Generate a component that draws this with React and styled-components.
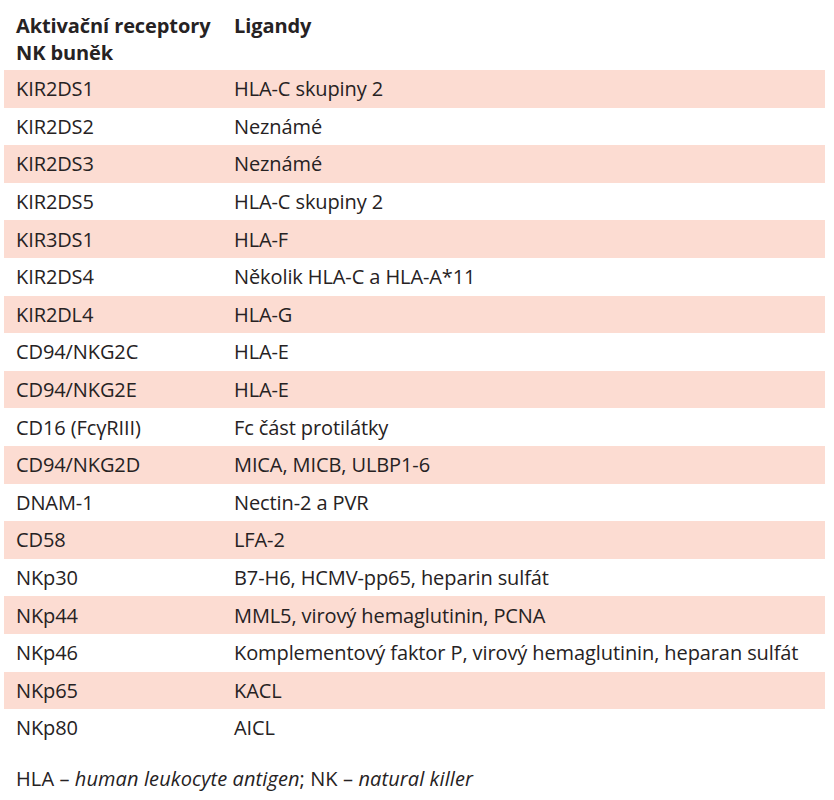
import { Fragment } from 'react';
import styled, { createGlobalStyle } from 'styled-components';

const GlobalStyle = createGlobalStyle`
  body {
    margin: 0;
    background: #ffffff;
    font-family: 'Open Sans', 'Noto Sans', sans-serif;
    color: #262223;
  }
`;

const rows = [
  ['KIR2DS1', 'HLA-C skupiny 2'],
  ['KIR2DS2', 'Neznámé'],
  ['KIR2DS3', 'Neznámé'],
  ['KIR2DS5', 'HLA-C skupiny 2'],
  ['KIR3DS1', 'HLA-F'],
  ['KIR2DS4', 'Několik HLA-C a HLA-A*11'],
  ['KIR2DL4', 'HLA-G'],
  ['CD94/NKG2C', 'HLA-E'],
  ['CD94/NKG2E', 'HLA-E'],
  ['CD16 (FcγRIII)', 'Fc část protilátky'],
  ['CD94/NKG2D', 'MICA, MICB, ULBP1-6'],
  ['DNAM-1', 'Nectin-2 a PVR'],
  ['CD58', 'LFA-2'],
  ['NKp30', 'B7-H6, HCMV-pp65, heparin sulfát'],
  ['NKp44', 'MML5, virový hemaglutinin, PCNA'],
  ['NKp46', 'Komplementový faktor P, virový hemaglutinin, heparan sulfát'],
  ['NKp65', 'KACL'],
  ['NKp80', 'AICL'],
];

const Page = styled.div`
  width: 834px;
  padding: 10px 9px 0 4px;
  box-sizing: border-box;
`;

const Table = styled.div`
  display: grid;
  grid-template-columns: 218px 1fr;
  font-size: 20px;
  letter-spacing: -0.1px;
`;

const HeadCell = styled.div`
  font-weight: 700;
  line-height: 27px;
  padding: 2px 0 4px 12px;
`;

const Cell = styled.div`
  height: 37.6px;
  display: flex;
  align-items: center;
  padding-left: 12px;
  white-space: nowrap;
  background: ${({ $shaded }) => ($shaded ? '#fcdcd2' : 'transparent')};
`;

const Note = styled.p`
  margin: 18px 0 0 12px;
  font-size: 20px;
  letter-spacing: 0.1px;

  em {
    font-style: italic;
  }
`;

export default function App() {
  return (
    <Page>
      <GlobalStyle />
      <Table>
        <HeadCell>
          Aktivační receptory
          <br />
          NK buněk
        </HeadCell>
        <HeadCell>Ligandy</HeadCell>
        {rows.map(([receptor, ligand], i) => (
          <Fragment key={receptor}>
            <Cell $shaded={i % 2 === 0}>{receptor}</Cell>
            <Cell $shaded={i % 2 === 0}>{ligand}</Cell>
          </Fragment>
        ))}
      </Table>
      <Note>
        HLA – <em>human leukocyte antigen</em>; NK – <em>natural killer</em>
      </Note>
    </Page>
  );
}
